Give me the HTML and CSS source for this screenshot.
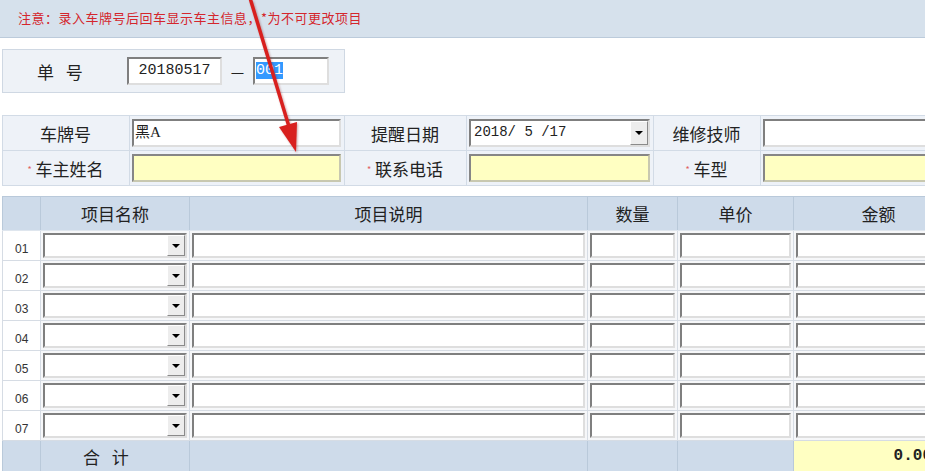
FILE: index.html
```html
<!DOCTYPE html>
<html>
<head>
    <meta charset="utf-8">
    <title>维修单</title>
    <link rel="stylesheet" href="styles.css">
</head>
<body>
    <div class="notice">注意：录入车牌号后回车显示车主信息，*为不可更改项目</div>

    <div class="order">
        <span class="order-label">单 号</span>
        <div class="field order-date">20180517</div>
        <span class="dash">—</span>
        <div class="field order-seq"><span class="selected">001</span></div>
    </div>

    <table class="info">
        <colgroup>
            <col style="width:127px"><col style="width:215px"><col style="width:122px">
            <col style="width:187px"><col style="width:107px"><col style="width:200px">
        </colgroup>
        <tr>
            <td class="label">车牌号</td>
            <td><div class="field text">黑A</div></td>
            <td class="label">提醒日期</td>
            <td>
                <div class="field combo">
                    <span class="value">2018/ 5 /17</span>
                    <span class="drop"></span>
                </div>
            </td>
            <td class="label">维修技师</td>
            <td>
                <div class="field combo">
                    <span class="value"></span>
                    <span class="drop"></span>
                </div>
            </td>
        </tr>
        <tr>
            <td class="label"><span class="req">*</span>车主姓名</td>
            <td><div class="field locked"></div></td>
            <td class="label"><span class="req">*</span>联系电话</td>
            <td><div class="field locked"></div></td>
            <td class="label"><span class="req">*</span>车型</td>
            <td><div class="field locked"></div></td>
        </tr>
    </table>

    <table class="grid">
        <colgroup>
            <col style="width:38px"><col style="width:149px"><col style="width:398px">
            <col style="width:90px"><col style="width:116px"><col style="width:170px">
        </colgroup>
        <thead>
            <tr>
                <th></th>
                <th>项目名称</th>
                <th>项目说明</th>
                <th>数量</th>
                <th>单价</th>
                <th>金额</th>
            </tr>
        </thead>
        <tbody id="items"></tbody>
        <tfoot>
            <tr>
                <td></td>
                <td class="sum-label">合 计</td>
                <td></td>
                <td></td>
                <td></td>
                <td class="sum">0.00</td>
            </tr>
        </tfoot>
    </table>

    <svg class="arrow" width="925" height="471" viewBox="0 0 925 471">
        <line x1="250" y1="-2" x2="290" y2="130" stroke="#d8201e" stroke-width="3.5" stroke-linecap="round"/>
        <polygon points="296,152 279,127 297,122" fill="#d8201e"/>
    </svg>

    <script>
        // item rows 01-07: combo for the name, plain boxes for the rest
        const body = document.getElementById('items');
        for (let i = 1; i <= 7; i++) {
            const tr = document.createElement('tr');
            tr.innerHTML = `
                <td class="num">0${i}</td>
                <td><div class="field combo small"><span class="value"></span><span class="drop"></span></div></td>
                <td><div class="field small"></div></td>
                <td><div class="field small"></div></td>
                <td><div class="field small"></div></td>
                <td><div class="field small"></div></td>
            `;
            body.appendChild(tr);
        }
    </script>
</body>
</html>
```

FILE: styles.css
```css
html, body {
    overflow: hidden;
}
body {
    margin: 0;
    position: relative;
    font-family: "Noto Sans CJK SC", "Liberation Sans", sans-serif;
    color: #222;
    background: #fff;
}
.notice {
    height: 37px;
    line-height: 35px;
    padding-left: 18px;
    background: #d6e1ec;
    border-bottom: 1px solid #bccbdb;
    color: #d4262c;
    font-size: 13px;
    letter-spacing: 0.5px;
}
.order {
    display: flex;
    align-items: center;
    box-sizing: border-box;
    width: 343px;
    height: 44px;
    margin: 11px 0 0 2px;
    padding-left: 34px;
    background: #eef2f7;
    border: 1px solid #cfd8e3;
}
.order-label {
    width: 90px;
    font-size: 17px;
    letter-spacing: 4px;
}
.field {
    box-sizing: border-box;
    height: 28px;
    background: #fff;
    border: 2px solid;
    border-color: #7f7f7f #dedede #dedede #7f7f7f;
}
.order-date {
    width: 95px;
    text-align: center;
    font-family: "Liberation Mono", monospace;
    font-size: 15px;
    line-height: 24px;
}
.dash {
    width: 31px;
    text-align: center;
    font-size: 15px;
}
.order-seq {
    width: 76px;
    padding-left: 1px;
    font-family: "Liberation Mono", monospace;
    font-size: 15px;
    line-height: 24px;
}
.selected {
    background: #3399ff;
    color: #fff;
}
.info {
    border-collapse: collapse;
    table-layout: fixed;
    width: 958px;
    margin: 22px 0 0 2px;
    background: #eef2f8;
}
.info td {
    height: 34px;
    padding: 0 3px 0 2px;
    border: 1px solid #d2dbe6;
    vertical-align: middle;
}
.info .label {
    text-align: center;
    font-size: 17px;
    white-space: nowrap;
}
.req {
    color: #e06060;
    font-size: 9px;
    margin-right: 4px;
    vertical-align: 3px;
}
.text {
    padding-left: 1px;
    font-family: "Liberation Serif", "Noto Sans CJK SC", serif;
    font-size: 15px;
    line-height: 22px;
}
.locked {
    background: #ffffc2;
    border-color: #868686 #c8c8b0 #c8c8b0 #868686;
}
.combo {
    display: flex;
}
.combo .value {
    flex: 1;
    padding-left: 3px;
    font-family: "Liberation Mono", monospace;
    font-size: 14px;
    line-height: 22px;
}
.drop {
    display: flex;
    align-items: center;
    justify-content: center;
    width: 18px;
    box-sizing: border-box;
    background: #ededed;
    border: 1px solid;
    border-color: #fff #8a8a8a #8a8a8a #fff;
}
.drop::after {
    content: "";
    border-left: 4px solid transparent;
    border-right: 4px solid transparent;
    border-top: 4px solid #000;
}
.grid {
    border-collapse: collapse;
    table-layout: fixed;
    width: 961px;
    margin: 10px 0 0 2px;
}
.grid th {
    height: 33px;
    padding: 0;
    background: #cedbea;
    border: 1px solid #b9c9da;
    border-bottom-color: #dfe6ee;
    font-weight: normal;
    font-size: 17px;
}
.grid td {
    height: 29px;
    padding: 0 2px;
    background: #f6f7f9;
    border: 1px solid #d6dce4;
}
.grid .num {
    height: 25px;
    padding: 0 0 4px 12px;
    font-family: "Liberation Sans", sans-serif;
    font-size: 12px;
    color: #333;
    vertical-align: bottom;
    background: #fff;
}
.grid .small {
    height: 25px;
}
.grid tfoot td {
    height: 30px;
    background: #cedbea;
    border-color: #b9c9da;
}
.grid .sum-label {
    padding-left: 42px;
    font-size: 17px;
    letter-spacing: 4px;
}
.grid .sum {
    background: #ffffc2;
    text-align: right;
    padding-right: 31px;
    font-family: "Liberation Mono", monospace;
    font-weight: bold;
    font-size: 16px;
}
.arrow {
    position: absolute;
    top: 0;
    left: 0;
    pointer-events: none;
    filter: drop-shadow(1px 1px 1px rgba(120, 0, 0, 0.35));
}
```
